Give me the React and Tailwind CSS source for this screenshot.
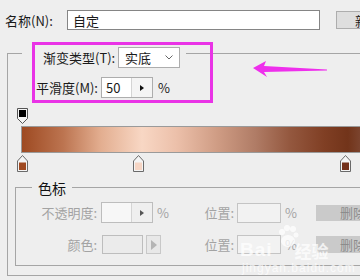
export default function App() {
  const gray = "text-[#a3a3a3]";
  return (
    <div className="relative w-[360px] h-[280px] overflow-hidden bg-[#eeeeee] text-[13px] leading-none text-[#1a1a1a] font-['Noto_Sans_CJK_SC',sans-serif]">
      {/* name row */}
      <div className="flex items-center pt-[10px]">
        <div className="ml-[5px] w-[62px] shrink-0">名称(N):</div>
        <div className="flex h-[20px] w-[253px] shrink-0 items-center border border-[#858585] bg-white pl-[5px]">自定</div>
        <div className="ml-[16px] flex h-[18px] w-[60px] shrink-0 items-center border border-[#adadad] bg-[#dedede] pl-[18px]">新建</div>
      </div>

      {/* outer group */}
      <div className="ml-[7px] mt-[23px] w-[400px] border-l border-t border-b border-[#a5a5a5] pb-[9px]">
        <div className="-mt-[7px] ml-[14px] flex h-[21px] w-[164px] items-center bg-[#eeeeee] pl-[21px]">
          <span className="w-[75px] shrink-0">渐变类型(T):</span>
          <div className="flex h-[21px] w-[62px] shrink-0 items-center justify-between border border-[#adadad] bg-white pl-[6px] pr-[6px]">
            <span>实底</span>
            <svg width="8" height="5" viewBox="0 0 8 5">
              <path d="M0.5 0.5 L4 4 L7.5 0.5" fill="none" stroke="#666" strokeWidth="1" />
            </svg>
          </div>
        </div>

        <div className="mt-[9px] flex h-[21px] items-center">
          <span className="ml-[28px] w-[65px] shrink-0">平滑度(M):</span>
          <div className="flex h-[21px] w-[52px] shrink-0 border border-[#adadad]">
            <div className="flex w-[29px] items-center bg-white pl-[4px]">50</div>
            <div className="flex flex-1 items-center justify-center border-l border-[#d4d4d4] bg-[#f4f4f4]">
              <svg width="4" height="6" viewBox="0 0 4 6">
                <path d="M0 0 L4 3 L0 6 Z" fill="#111" />
              </svg>
            </div>
          </div>
          <span className="ml-[5px]">%</span>
        </div>

        {/* top stop */}
        <div className="ml-[9px] mt-[10px] h-[16px]">
          <svg width="11" height="16" viewBox="0 0 11 16">
            <path d="M0.5 0.5 H10.5 V10.5 L5.5 15.5 L0.5 10.5 Z" fill="#f4f4f4" stroke="#555" />
            <rect x="2" y="2" width="7" height="7" fill="#000" />
          </svg>
        </div>

        {/* gradient bar */}
        <div className="ml-[13px] mt-[2px] h-[27px] w-[345px] border border-[#9a9a9a] bg-[linear-gradient(to_right,#9e4a22_0%,#bc7450_12%,#e3ae90_23%,#f8d7c4_35%,#ecc0aa_45%,#cf9c84_57%,#b07c66_68%,#94583f_78%,#803f24_88%,#72341a_95%,#7e4a36_100%)]" />

        {/* bottom stops */}
        <div className="ml-[9px] mt-[2px] flex h-[17px]">
          <Stop color="#a04a22" />
          <div className="ml-[105px]"><Stop color="#f6d5c4" /></div>
          <div className="ml-[196px]"><Stop color="#73301a" /></div>
        </div>

        {/* 色标 group */}
        <div className="ml-[7px] mt-[15px] h-[79px] border-l border-t border-b border-[#a5a5a5]">
          <div className="-mt-[9px] ml-[16px] flex h-[18px] w-fit items-center bg-[#eeeeee] px-[6px] text-[14px] text-[#111]">色标</div>

          <div className={`mt-[5px] flex h-[21px] items-center ${gray}`}>
            <span className="w-[81px] shrink-0 text-right">不透明度:</span>
            <div className="ml-[4px] flex h-[21px] w-[52px] shrink-0 border border-[#bdbdbd]">
              <div className="w-[29px] bg-[#f7f7f7]" />
              <div className="flex flex-1 items-center justify-center border-l border-[#d4d4d4] bg-[#efefef]">
                <svg width="4" height="6" viewBox="0 0 4 6">
                  <path d="M0 0 L4 3 L0 6 Z" fill="#555" />
                </svg>
              </div>
            </div>
            <span className="ml-[4px] w-[11px] shrink-0">%</span>
            <span className="w-[66px] shrink-0 text-right">位置:</span>
            <div className="ml-[3px] h-[20px] w-[44px] shrink-0 border border-[#c4c4c4] bg-[#f2f2f2]" />
            <span className="ml-[4px] w-[11px] shrink-0">%</span>
            <div className="ml-[20px] flex h-[16px] w-[60px] shrink-0 items-center bg-[#cacaca] pl-[24px] text-[#8c8c8c]">删除</div>
          </div>

          <div className={`mt-[12px] flex h-[19px] items-center ${gray}`}>
            <span className="w-[81px] shrink-0 text-right">颜色:</span>
            <div className="ml-[5px] h-[19px] w-[41px] shrink-0 border border-[#bdbdbd] bg-[#ebebeb]" />
            <div className="ml-[3px] flex h-[19px] w-[15px] shrink-0 items-center justify-center border border-[#c8c8c8] bg-[#e8e8e8]">
              <svg width="6" height="10" viewBox="0 0 6 10">
                <path d="M0 0 L6 5 L0 10 Z" fill="#b5b5b5" />
              </svg>
            </div>
            <span className="w-[73px] shrink-0 text-right">位置:</span>
            <div className="ml-[3px] h-[19px] w-[44px] shrink-0 border border-[#c4c4c4] bg-[#f2f2f2]" />
            <span className="ml-[4px] w-[11px] shrink-0">%</span>
            <div className="ml-[20px] flex h-[17px] w-[60px] shrink-0 items-center bg-[#cacaca] pl-[24px] text-[#8c8c8c]">删除</div>
          </div>
        </div>
      </div>

      {/* annotation: magenta box */}
      <div className="absolute left-[32px] top-[42px] h-[61px] w-[181px] border-[3px] border-[#e933e6]" />

      {/* annotation: arrow */}
      <svg className="absolute left-[250px] top-[58px]" width="80" height="22" viewBox="0 0 80 22">
        <path d="M3 10 L16 3 L14 8 L77 11.5 L77 12.5 L14 14 L17 19 Z" fill="#ee2fec" />
      </svg>

      {/* watermark */}
      <div className="pointer-events-none absolute left-[240px] top-[222px] text-white opacity-75">
        <svg className="absolute left-[36px] top-[2px]" width="24" height="24" viewBox="0 0 24 24">
          <circle cx="6" cy="8" r="3" fill="#fff" />
          <circle cx="11" cy="4" r="3" fill="#fff" />
          <circle cx="17" cy="5" r="3" fill="#fff" />
          <circle cx="20" cy="11" r="2.5" fill="#fff" />
          <ellipse cx="12" cy="17" rx="7" ry="6" fill="#fff" />
        </svg>
        <div className="flex items-end pt-[18px]">
          <span className="font-['Liberation_Sans',sans-serif] text-[19px] font-bold leading-none tracking-[1px]">Bai</span>
          <span className="ml-[22px] text-[17px] font-bold leading-none">经验</span>
        </div>
        <div className="mt-[3px] ml-[2px] font-['Liberation_Sans',sans-serif] text-[12px] leading-none tracking-[1px]">jingyan.baidu.com</div>
      </div>
    </div>
  );
}

function Stop({ color }) {
  return (
    <svg width="11" height="17" viewBox="0 0 11 17">
      <path d="M0.5 6 L5.5 0.5 L10.5 6 V16.5 H0.5 Z" fill="#f4f4f4" stroke="#6a6a6a" />
      <rect x="2" y="7.5" width="7" height="7.5" fill={color} />
    </svg>
  );
}
